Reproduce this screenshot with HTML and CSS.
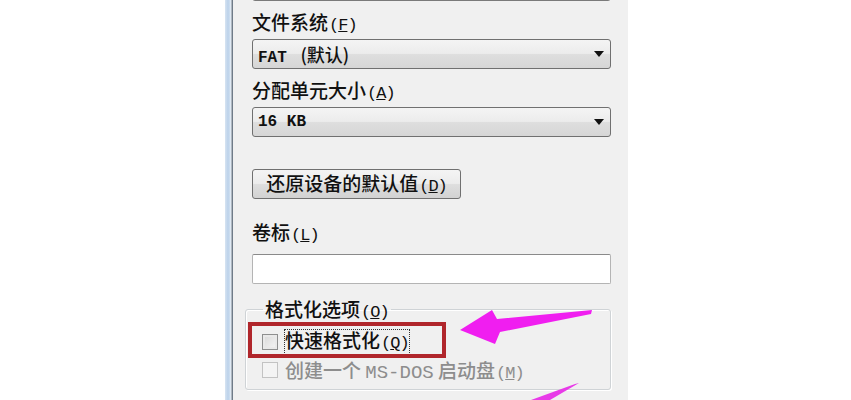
FILE: index.html
```html
<!DOCTYPE html>
<html lang="zh-CN">
<head>
<meta charset="utf-8">
<title>格式化</title>
<link rel="stylesheet" href="styles.css">
</head>
<body>
<div class="page">
  <div class="gutter"></div>
  <div class="frame-edge"></div>
  <div class="panel">
    <div class="prev-box"></div>

    <div class="label">文件系统<span class="ak">(<u>F</u>)</span></div>
    <div class="combo"><span class="val mono">FAT <span class="cjk">(默认)</span></span><span class="arrow"></span></div>

    <div class="label">分配单元大小<span class="ak">(<u>A</u>)</span></div>
    <div class="combo"><span class="val mono">16 KB</span><span class="arrow"></span></div>

    <button class="btn">还原设备的默认值<span class="ak">(<u>D</u>)</span></button>

    <div class="label label-vol">卷标<span class="ak">(<u>L</u>)</span></div>
    <div class="input"></div>

    <fieldset class="group">
      <legend class="legend">格式化选项<span class="ak">(<u>O</u>)</span></legend>
      <div class="row">
        <span class="check"></span>
        <span class="focus">快速格式化<span class="ak">(<u>Q</u>)</span></span>
      </div>
      <div class="row disabled">
        <span class="check"></span>
        <span>创建一个 <span class="mono">MS-DOS</span> 启动盘<span class="ak">(<u>M</u>)</span></span>
      </div>
    </fieldset>
  </div>
  <div class="rest"></div>
</div>

<svg class="annot" width="851" height="400" viewBox="0 0 851 400" aria-hidden="true">
  <rect x="250" y="324" width="194" height="32" fill="none" stroke="#b0262b" stroke-width="4"/>
  <polygon points="460,330 492,310 497,319 592,310 591,314 500,332 495,344" fill="#f01ef0"/>
  <polygon points="579,383 575,384 531,400 550,400" fill="#e83ae8"/>
</svg>
</body>
</html>
```
FILE: styles.css
```css
html, body {
  margin: 0;
  padding: 0;
  background: #ffffff;
}
body {
  width: 851px;
  height: 400px;
  overflow: hidden;
  position: relative;
  font-family: "Noto Sans CJK SC", "Liberation Sans", sans-serif;
  font-weight: 500;
  color: #111111;
}
.page {
  display: flex;
  height: 400px;
}
.gutter {
  width: 225px;
  background: #ffffff;
}
.frame-edge {
  width: 8px;
  background: linear-gradient(to right, #d7e4f2 0, #bcd2ea 3px, #cfdff0 5px, #eef3f8 6px, #6f7b88 7px, #6f7b88 8px);
}
.panel {
  width: 395px;
  background: #f0f0f0;
  padding: 0 17px 0 19px;
  box-sizing: border-box;
  display: flex;
  flex-direction: column;
}
.rest {
  flex: 1;
  background: #ffffff;
}
.prev-box {
  height: 30px;
  margin-top: -29px;
  border: 1px solid #7a7a7a;
  border-radius: 3px;
  background: linear-gradient(#f2f2f2, #dcdcdc);
  box-sizing: border-box;
}
.label {
  margin-top: 8px;
  height: 26px;
  line-height: 26px;
  font-size: 19px;
}
.ak {
  font-family: "Liberation Mono", "Noto Sans CJK SC", monospace;
  font-weight: normal;
  font-size: 17px;
  letter-spacing: -1px;
  margin-left: 1px;
}
.combo {
  margin-top: 4px;
  height: 30px;
  border: 1px solid #707070;
  border-radius: 3px;
  box-sizing: border-box;
  background: linear-gradient(#f4f4f4 0, #ececec 48%, #dedede 52%, #d6d6d6 100%);
  display: flex;
  align-items: center;
  justify-content: space-between;
  padding: 0 6px 0 5px;
}
.val {
  font-size: 16px;
  font-weight: bold;
}
.mono {
  font-family: "Liberation Mono", "Noto Sans CJK SC", monospace;
}
.cjk {
  font-family: "Noto Sans CJK SC", sans-serif;
  font-weight: 500;
  font-size: 18px;
  margin-left: 4px;
}
.arrow {
  width: 0;
  height: 0;
  border-left: 5px solid transparent;
  border-right: 5px solid transparent;
  border-top: 6px solid #111;
}
.btn {
  margin-top: 32px;
  align-self: flex-start;
  width: 209px;
  height: 30px;
  border: 1px solid #707070;
  border-radius: 3px;
  background: linear-gradient(#f4f4f4 0, #ececec 48%, #dedede 52%, #d2d2d2 100%);
  font-family: "Noto Sans CJK SC", sans-serif;
  font-weight: 500;
  font-size: 19px;
  color: #111111;
  padding: 0 6px;
  line-height: 26px;
  white-space: nowrap;
}
.label-vol {
  margin-top: 20px;
}
.input {
  margin-top: 9px;
  height: 30px;
  background: #ffffff;
  border: 1px solid #b4b4b4;
  border-top-color: #8a8a8a;
  border-radius: 2px;
  box-sizing: border-box;
}
.group {
  margin: 13px 0 0 -7px;
  padding: 9px 0 7px 16px;
  border: 1px solid #cfd3d6;
  border-radius: 3px;
  box-shadow: inset 1px 1px 0 #ffffff, 1px 1px 0 #ffffff;
  min-width: 0;
}
.legend {
  padding: 0 2px;
  margin-left: 1px;
  font-size: 19px;
  line-height: 24px;
  height: 24px;
}
.row {
  height: 24px;
  display: flex;
  align-items: center;
  gap: 7px;
  font-size: 19px;
  margin-bottom: 4px;
}
.row:last-child {
  margin-bottom: 0;
}
.check {
  width: 16px;
  height: 16px;
  box-sizing: border-box;
  border: 1px solid #8e8f8f;
  background: linear-gradient(135deg, #d8d8d8, #f6f6f6);
  box-shadow: inset 0 0 0 2px #e9e9e9;
}
.focus {
  outline: 1px dotted #333;
  outline-offset: 0;
  line-height: 20px;
}
.disabled {
  color: #8d8d8d;
}
.disabled .check {
  border-color: #c3c3c3;
  background: #f4f4f4;
  box-shadow: none;
}
.annot {
  position: absolute;
  top: 0;
  left: 0;
  pointer-events: none;
}
```
